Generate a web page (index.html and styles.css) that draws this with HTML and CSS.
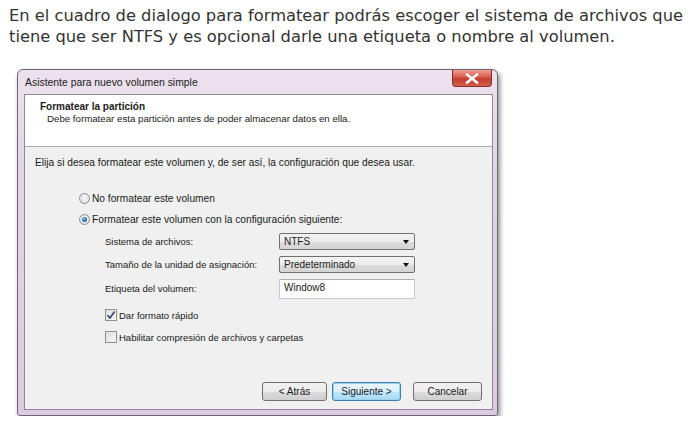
FILE: index.html
```html
<!DOCTYPE html>
<html lang="es">
<head>
<meta charset="utf-8">
<title>Formatear la partición</title>
<link rel="stylesheet" href="styles.css">
</head>
<body>
<p class="intro">En el cuadro de dialogo para formatear podrás escoger el sistema de archivos que tiene que ser NTFS y es opcional darle una etiqueta o nombre al volumen.</p>
<div class="window">
  <div class="titlebar">
    <span class="title">Asistente para nuevo volumen simple</span>
    <div class="close">
      <svg width="14" height="11" viewBox="0 0 14 11"><path d="M2 1.5 L12 9.5 M12 1.5 L2 9.5" stroke="#fff" stroke-width="2.6" stroke-linecap="round"/></svg>
    </div>
  </div>
  <div class="client">
    <div class="header">
      <div class="h-title">Formatear la partición</div>
      <div class="h-sub">Debe formatear esta partición antes de poder almacenar datos en ella.</div>
    </div>
    <div class="body">
      <p class="lead">Elija si desea formatear este volumen y, de ser así, la configuración que desea usar.</p>
      <div class="opt first"><span class="radio"></span>No formatear este volumen</div>
      <div class="opt"><span class="radio on"></span>Formatear este volumen con la configuración siguiente:</div>
      <div class="form">
        <span class="lbl">Sistema de archivos:</span>
        <div class="select">NTFS<span class="arrow"></span></div>
        <span class="lbl">Tamaño de la unidad de asignación:</span>
        <div class="select">Predeterminado<span class="arrow"></span></div>
        <span class="lbl">Etiqueta del volumen:</span>
        <div class="input">Window8</div>
      </div>
      <div class="chk first"><span class="box"><svg width="10" height="10" viewBox="0 0 10 10"><path d="M1.5 5.2 L4 8 L8.6 1.6" fill="none" stroke="#34476e" stroke-width="1.7"/></svg></span>Dar formato rápido</div>
      <div class="chk"><span class="box"></span>Habilitar compresión de archivos y carpetas</div>
      <div class="footer">
        <div class="btn b-back">&lt; Atrás</div>
        <div class="btn b-next">Siguiente &gt;</div>
        <div class="btn b-cancel">Cancelar</div>
      </div>
    </div>
  </div>
</div>
</body>
</html>
```

FILE: styles.css
```css
body {
  margin: 0;
  background: #fff;
}

.intro {
  margin: 0;
  padding: 5px 0 0 9px;
  font: 16.3px/21px "DejaVu Sans", "Noto Sans", sans-serif;
  color: #333;
  width: 682px;
}

.window {
  position: relative;
  box-sizing: border-box;
  margin: 22px 0 0 17px;
  width: 481px;
  height: 347px;
  border: 1px solid #6e6272;
  border-radius: 6px 6px 3px 3px;
  padding: 0 4px 5px 6px;
  background: linear-gradient(180deg, #ece2ee 0%, #e2d4e6 30%, #dccbe0 100%);
  box-shadow: 2px 3px 5px rgba(0, 0, 0, 0.45);
  display: flex;
  flex-direction: column;
  font-family: "Liberation Sans", Arial, sans-serif;
  color: #1a1a1a;
}

.titlebar {
  height: 24px;
  display: flex;
  align-items: center;
  padding-left: 1px;
}

.title {
  font-size: 10.4px;
  color: #202020;
}

.close {
  position: absolute;
  top: 0;
  right: 5px;
  width: 40px;
  height: 17px;
  box-sizing: border-box;
  border: 1px solid #8c2c22;
  border-top: none;
  border-radius: 0 0 4px 4px;
  background: linear-gradient(180deg, #eda08f 0%, #d9594a 45%, #c23a2b 55%, #d2624e 100%);
  display: flex;
  align-items: center;
  justify-content: center;
}

.client {
  flex: 1;
  display: flex;
  flex-direction: column;
  border: 1px solid #8f8898;
  background: #f0f0f0;
}

.header {
  box-sizing: border-box;
  height: 52px;
  padding-top: 6px;
  background: #fff;
  border-bottom: 1px solid #a8a8a8;
}

.h-title {
  font-size: 10px;
  font-weight: bold;
  line-height: 12px;
  padding-left: 15px;
}

.h-sub {
  font-size: 9.7px;
  line-height: 11px;
  padding-left: 22px;
  color: #222;
}

.body {
  flex: 1;
  display: flex;
  flex-direction: column;
  padding: 10px 10px 8px 0;
  font-size: 9.5px;
}

.lead {
  margin: 0;
  line-height: 12px;
  padding-left: 10px;
  font-size: 10.2px;
}

.opt {
  display: flex;
  align-items: center;
  height: 14px;
  margin: 7px 0 0 54px;
  font-size: 10.2px;
}

.opt.first {
  margin-top: 22px;
}

.radio {
  width: 11px;
  height: 11px;
  box-sizing: border-box;
  border: 1px solid #8d8d8d;
  border-radius: 50%;
  background: radial-gradient(circle at 50% 40%, #f6f6f6 0%, #dcdcdc 100%);
  margin-right: 2px;
  display: flex;
  align-items: center;
  justify-content: center;
}

.radio.on::after {
  content: "";
  width: 5px;
  height: 5px;
  border-radius: 50%;
  background: radial-gradient(circle at 40% 35%, #7fc3ee 0%, #1f6aa5 60%, #164a78 100%);
}

.form {
  display: grid;
  grid-template-columns: 174px 136px;
  row-gap: 6px;
  align-items: center;
  margin: 7px 0 0 80px;
}

.lbl {
  line-height: 12px;
}

.select {
  position: relative;
  height: 17px;
  box-sizing: border-box;
  border: 1px solid #707070;
  border-radius: 2px;
  background: linear-gradient(180deg, #f4f4f4 0%, #ebebeb 50%, #dcdcdc 51%, #d4d4d4 100%);
  padding: 2px 0 0 4px;
  line-height: 12px;
  font-size: 10px;
}

.arrow {
  position: absolute;
  right: 5px;
  top: 6px;
  width: 0;
  height: 0;
  border-left: 3.5px solid transparent;
  border-right: 3.5px solid transparent;
  border-top: 4px solid #111;
}

.input {
  height: 20px;
  box-sizing: border-box;
  border: 1px solid #c5cad2;
  border-top-color: #abadb3;
  background: #fff;
  padding: 2px 0 0 4px;
  line-height: 12px;
  font-size: 10px;
}

.chk {
  display: flex;
  align-items: center;
  height: 12px;
  margin: 10px 0 0 80px;
}

.box {
  width: 12px;
  height: 12px;
  box-sizing: border-box;
  border: 1px solid #8e8f8f;
  background: linear-gradient(135deg, #e0e0e0 0%, #f6f6f6 100%);
  margin-right: 2px;
  display: flex;
  align-items: center;
  justify-content: center;
}

.footer {
  margin-top: auto;
  display: flex;
  justify-content: flex-end;
}

.btn {
  height: 19px;
  box-sizing: border-box;
  border: 1px solid #707070;
  border-radius: 3px;
  background: linear-gradient(180deg, #f2f2f2 0%, #ebebeb 50%, #dddddd 51%, #cfcfcf 100%);
  display: flex;
  align-items: center;
  justify-content: center;
  font-size: 10px;
  width: 69px;
}

.b-back {
  width: 65px;
}

.b-next {
  margin-left: 5px;
  border-color: #3c7fb1;
  box-shadow: inset 0 0 0 1px #9ed2f0;
  background: linear-gradient(180deg, #eaf6fd 0%, #d9f0fc 50%, #bee6fd 51%, #a7d9f5 100%);
}

.b-cancel {
  margin-left: 12px;
}
```
